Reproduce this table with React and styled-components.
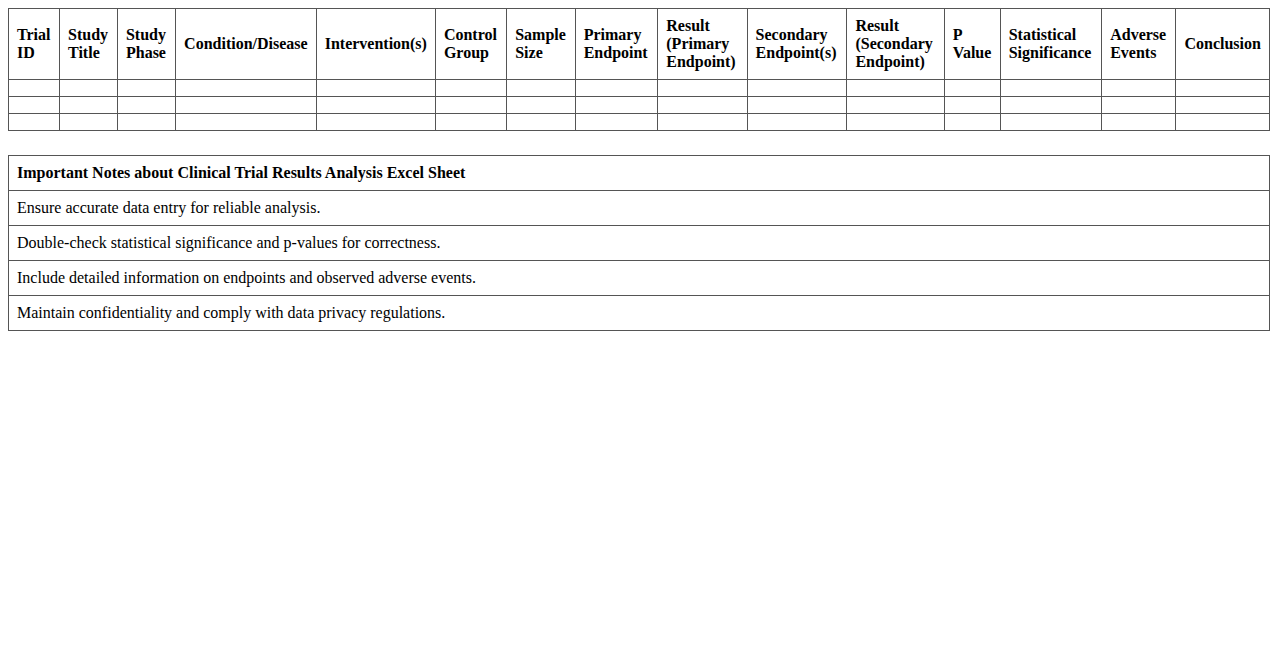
import React from "react";
import styled, { createGlobalStyle } from "styled-components";

const GlobalStyle = createGlobalStyle`
  body {
    margin: 8px;
    font-family: "Liberation Serif", "Times New Roman", serif;
    font-size: 16px;
    color: #000;
    background: #fff;
  }
`;

const Page = styled.div`
  display: flex;
  flex-direction: column;
  gap: 24px;
`;

const Table = styled.table`
  width: 100%;
  border-collapse: collapse;
`;

const HeadCell = styled.th`
  border: 1px solid #555;
  padding: 8px;
  text-align: left;
  vertical-align: middle;
  font-weight: bold;
`;

const Cell = styled.td`
  border: 1px solid #555;
  padding: 8px;
  text-align: left;
  font-weight: ${(p) => (p.$strong ? "bold" : "normal")};
`;

const columns = [
  "Trial ID",
  "Study Title",
  "Study Phase",
  "Condition/Disease",
  "Intervention(s)",
  "Control Group",
  "Sample Size",
  "Primary Endpoint",
  "Result (Primary Endpoint)",
  "Secondary Endpoint(s)",
  "Result (Secondary Endpoint)",
  "P Value",
  "Statistical Significance",
  "Adverse Events",
  "Conclusion",
];

const notes = [
  "Ensure accurate data entry for reliable analysis.",
  "Double-check statistical significance and p-values for correctness.",
  "Include detailed information on endpoints and observed adverse events.",
  "Maintain confidentiality and comply with data privacy regulations.",
];

export default function App() {
  return (
    <>
      <GlobalStyle />
      <Page>
        <Table>
          <thead>
            <tr>
              {columns.map((c) => (
                <HeadCell key={c}>{c}</HeadCell>
              ))}
            </tr>
          </thead>
          <tbody>
            {[0, 1, 2].map((r) => (
              <tr key={r}>
                {columns.map((c) => (
                  <Cell key={c}></Cell>
                ))}
              </tr>
            ))}
          </tbody>
        </Table>
        <Table>
          <tbody>
            <tr>
              <Cell $strong>Important Notes about Clinical Trial Results Analysis Excel Sheet</Cell>
            </tr>
            {notes.map((n) => (
              <tr key={n}>
                <Cell>{n}</Cell>
              </tr>
            ))}
          </tbody>
        </Table>
      </Page>
    </>
  );
}
